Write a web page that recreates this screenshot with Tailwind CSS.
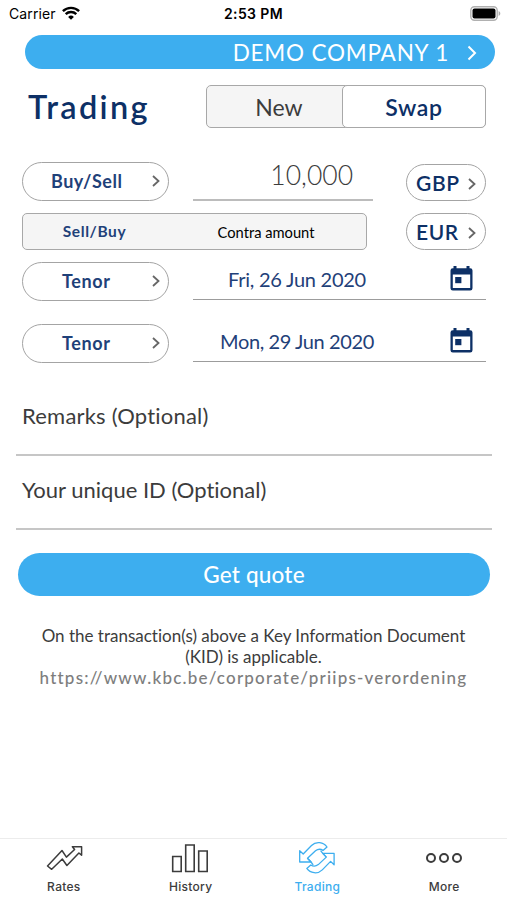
<!DOCTYPE html>
<html lang="en">
<head>
    <meta charset="UTF-8">
    <meta name="viewport" content="width=device-width, initial-scale=1.0">
    <title>Trading</title>
    <script src="https://cdn.jsdelivr.net/npm/@tailwindcss/browser@4"></script>
</head>
<body class="bg-white">
    <div class="flex flex-col w-[507px] h-[900px] overflow-hidden font-['Lato',sans-serif] [font-variant-ligatures:none] text-[#3c3c3c]">

        <!-- Status bar -->
        <div class="grid grid-cols-3 items-center h-[27px] mb-2 px-[9px] font-['Inter',sans-serif] text-black">
            <div class="flex items-center gap-[6px] text-[14px]">
                <span class="tracking-[0.1px]">Carrier</span>
                <svg class="w-[18px] h-[14px] -mt-[2px]" viewBox="0 0 18 14" fill="none" stroke="#000" stroke-width="2.4">
                    <path d="M0.9 5.2a11.6 11.6 0 0 1 16.2 0"/>
                    <path d="M3.7 8.2a7.6 7.6 0 0 1 10.6 0"/>
                    <path d="M9 13.8L6.1 10.9a4.1 4.1 0 0 1 5.8 0z" fill="#000" stroke="none"/>
                </svg>
            </div>
            <div class="text-center text-[14px] font-semibold tracking-[0.4px]">2:53 PM</div>
            <div class="flex justify-end">
                <svg class="w-[31px] h-[15px] -mr-[3px] -mt-px" viewBox="0 0 31 15">
                    <rect x="0.8" y="0.8" width="26.4" height="13.4" rx="3.6" fill="#fff" stroke="#b0b0b0" stroke-width="1.4"/>
                    <rect x="2.5" y="2.5" width="23" height="10" rx="2" fill="#000"/>
                    <path d="M28.6 5v5c1-.4 1.7-1.4 1.7-2.5s-.7-2.1-1.7-2.5z" fill="#aaa"/>
                </svg>
            </div>
        </div>

        <!-- Company -->
        <button class="flex items-center justify-end h-[34px] shrink-0 ml-[25px] mr-[12px] pt-[2px] pr-[18px] rounded-full bg-[#3daeef] text-white">
            <span class="text-[22.5px] leading-none tracking-[0.8px]">DEMO COMPANY 1</span>
            <svg class="w-[10px] h-[16px] ml-[18px]" viewBox="0 0 10 16" fill="none" stroke="currentColor" stroke-width="2"><path d="M1.5 1.5L8 8l-6.5 6.5"/></svg>
        </button>

        <!-- Title -->
        <div class="flex items-center justify-between h-[43px] shrink-0 mt-4 pl-[28px] pr-[21px]">
            <h1 class="mt-px text-[32.5px] leading-none font-semibold tracking-[2.3px] text-[#0d3066]">Trading</h1>
            <div class="flex w-[280px] h-full rounded-[5px] border border-[#a8a8a8] bg-[#f5f5f5] text-[23px]">
                <div class="flex-1 flex items-center justify-center pt-[2px] pl-2">New</div>
                <div class="w-[144px] -m-px pt-[2px] flex items-center justify-center rounded-[5px] border border-[#a8a8a8] bg-white font-semibold tracking-[0.7px] text-[#0d3066]">Swap</div>
            </div>
        </div>

        <!-- Amounts -->
        <div class="flex items-end h-[39px] shrink-0 mt-[34px] pl-[22px] pr-[21px]">
            <button class="flex items-center justify-between w-[147px] h-[39px] pl-[28px] pr-[8px] pb-[2px] rounded-full border border-[#a4a4a4]">
                <span class="text-[18px] leading-none font-bold tracking-[0.5px] text-[#1f4179]">Buy/Sell</span>
                <svg class="w-[8px] h-[12px]" viewBox="0 0 8 12" fill="none" stroke="#666" stroke-width="1.8"><path d="M1 1l5.5 5L1 11"/></svg>
            </button>
            <div class="w-[180px] h-[39px] ml-[24px] pr-[20px] border-b-2 border-[#bcbcbc] text-right text-[26.5px] leading-[26px] font-light">10,000</div>
            <button class="flex items-center justify-between w-[80px] h-[37px] ml-auto px-[9px] rounded-full border border-[#a4a4a4]">
                <span class="text-[21px] leading-none font-semibold tracking-[0.6px] text-[#0d3066]">GBP</span>
                <svg class="w-[8px] h-[12px] mt-[2px]" viewBox="0 0 8 12" fill="none" stroke="#666" stroke-width="1.8"><path d="M1 1l5.5 5L1 11"/></svg>
            </button>
        </div>
        <div class="flex items-center h-[37px] shrink-0 mt-3 pl-[22px] pr-[21px]">
            <div class="flex items-center w-[345px] h-full pt-px rounded-[5px] border border-[#a8a8a8] bg-[#f5f5f5] leading-none">
                <span class="w-[143px] text-center text-[15.5px] font-bold tracking-[0.6px] text-[#1f4179]">Sell/Buy</span>
                <span class="flex-1 text-center text-[14.7px] text-black">Contra amount</span>
            </div>
            <button class="flex items-center justify-between w-[80px] h-full ml-auto px-[9px] rounded-full border border-[#a4a4a4]">
                <span class="text-[21px] leading-none font-semibold tracking-[0.6px] text-[#0d3066]">EUR</span>
                <svg class="w-[8px] h-[12px] mt-[2px]" viewBox="0 0 8 12" fill="none" stroke="#666" stroke-width="1.8"><path d="M1 1l5.5 5L1 11"/></svg>
            </button>
        </div>

        <!-- Dates -->
        <div class="flex h-[39px] shrink-0 mt-3 pl-[22px] pr-[21px]">
            <button class="flex items-center justify-between w-[147px] h-full pl-[39px] pr-[8px] pb-[2px] rounded-full border border-[#a4a4a4]">
                <span class="text-[18px] leading-none font-bold tracking-[0.6px] text-[#1f4179]">Tenor</span>
                <svg class="w-[8px] h-[12px]" viewBox="0 0 8 12" fill="none" stroke="#666" stroke-width="1.8"><path d="M1 1l5.5 5L1 11"/></svg>
            </button>
            <div class="flex items-center w-[293px] h-[38px] ml-[24px] pr-[13px] pb-[4px] border-b border-[#9c9c9c]">
                <span class="flex-1 pr-[49px] text-center text-[20px] leading-none tracking-[-0.25px] text-[#1f4179]">Fri, 26 Jun 2020</span>
                <svg class="w-[23px] h-[25px]" viewBox="0 0 23 25" fill="#0d3066"><path fill-rule="evenodd" d="M3.5 0h3v2.3h10V0h3v2.3h.7a2.3 2.3 0 0 1 2.3 2.3v17.6a2.3 2.3 0 0 1-2.3 2.3H2.8a2.3 2.3 0 0 1-2.3-2.3V4.6a2.3 2.3 0 0 1 2.3-2.3h.7zM2.8 8.4v13.5h17.4V8.4z"/><path d="M5.2 11h6.2v6.2H5.2z"/></svg>
            </div>
        </div>
        <div class="flex h-[39px] shrink-0 mt-[23px] pl-[22px] pr-[21px]">
            <button class="flex items-center justify-between w-[147px] h-full pl-[39px] pr-[8px] pb-[2px] rounded-full border border-[#a4a4a4]">
                <span class="text-[18px] leading-none font-bold tracking-[0.6px] text-[#1f4179]">Tenor</span>
                <svg class="w-[8px] h-[12px]" viewBox="0 0 8 12" fill="none" stroke="#666" stroke-width="1.8"><path d="M1 1l5.5 5L1 11"/></svg>
            </button>
            <div class="flex items-center w-[293px] h-[38px] ml-[24px] pr-[13px] pb-[4px] border-b border-[#9c9c9c]">
                <span class="flex-1 pr-[49px] text-center text-[20px] leading-none tracking-[-0.4px] text-[#1f4179]">Mon, 29 Jun 2020</span>
                <svg class="w-[23px] h-[25px]" viewBox="0 0 23 25" fill="#0d3066"><path fill-rule="evenodd" d="M3.5 0h3v2.3h10V0h3v2.3h.7a2.3 2.3 0 0 1 2.3 2.3v17.6a2.3 2.3 0 0 1-2.3 2.3H2.8a2.3 2.3 0 0 1-2.3-2.3V4.6a2.3 2.3 0 0 1 2.3-2.3h.7zM2.8 8.4v13.5h17.4V8.4z"/><path d="M5.2 11h6.2v6.2H5.2z"/></svg>
            </div>
        </div>

        <!-- Optional fields -->
        <div class="h-[53px] shrink-0 mt-[40px] ml-[16px] mr-[15px] pl-[6px] border-b-2 border-[#c6c6c6] text-[22px] leading-[26px] tracking-[0.2px]">Remarks (Optional)</div>
        <div class="h-[53px] shrink-0 mt-[21px] ml-[16px] mr-[15px] pl-[6px] border-b-2 border-[#c6c6c6] text-[22px] leading-[26px]">Your unique ID (Optional)</div>

        <button class="h-[43px] shrink-0 mt-[23px] ml-[18px] mr-[17px] pt-[2px] rounded-full bg-[#3daeef] text-white text-[22.5px] font-medium leading-none tracking-[0.2px]">Get quote</button>

        <div class="mt-[29px] text-center text-[17px] leading-[21px] whitespace-nowrap">
            <p>On the transaction(s) above a Key Information Document</p>
            <p>(KID) is applicable.</p>
            <p class="font-medium tracking-[1.2px] text-[#7d7d7d]">https://www.kbc.be/corporate/priips-verordening</p>
        </div>

        <!-- Tab bar -->
        <nav class="grid grid-cols-4 h-[62px] shrink-0 mt-auto border-t border-[#ececec] font-['Inter',sans-serif] text-[12px] leading-none font-medium tracking-[0.3px]">
            <div class="flex flex-col items-center">
                <svg class="w-[40px] h-[38px]" viewBox="0 0 40 38" fill="none" stroke="#3c3c3c" stroke-width="1.5" stroke-linejoin="round"><path d="M4.5 27L19 11.5l4.4 6.6 8.2-7.6-2.2-2.8h9.2v8.5l-2.7-2.2-12 12.5-4.6-6.5L8.7 30.3z"/></svg>
                <span class="mt-[4px] pl-px">Rates</span>
            </div>
            <div class="flex flex-col items-center">
                <svg class="w-[40px] h-[38px]" viewBox="0 0 40 38" fill="none" stroke="#3c3c3c" stroke-width="1.6"><path d="M2.7 17.5h8.5v15H2.7zM15.7 6h8.5v26.5h-8.5zM28.7 12h8.5v20.5h-8.5z"/></svg>
                <span class="mt-[4px] pl-px">History</span>
            </div>
            <div class="flex flex-col items-center text-[#3daeef]">
                <svg class="w-[40px] h-[38px]" viewBox="0 0 40 38" fill="none" stroke="currentColor" stroke-width="1.3" stroke-linejoin="round">
                    <path d="M2.7 11.7V23H14l-3.5-3.7 8-7.5c2.700-2.100 5-2.100 7.500-.4L30 8C26.500 3 19 2 14.500 6.500L6.200 15z"/>
                    <path d="M37.1 25.7V14.4H25.8l3.5 3.7-8 7.5c-2.700 2.100-5 2.100-7.500.4L9.800 29.400c3.500 5 11 6 15.500 1.500l8.300-8.500z"/>
                    <path d="M10.500 19.300L14 23l2.200 2.800M29.300 18.100l-3.500-3.700-2.200-2.800"/>
                </svg>
                <span class="mt-[4px] pl-px">Trading</span>
            </div>
            <div class="flex flex-col items-center">
                <svg class="w-[40px] h-[38px]" viewBox="0 0 40 38" fill="none" stroke="#3c3c3c" stroke-width="2"><circle cx="7" cy="19" r="4"/><circle cx="20" cy="19" r="4"/><circle cx="33" cy="19" r="4"/></svg>
                <span class="mt-[4px] pl-px">More</span>
            </div>
        </nav>
    </div>
</body>
</html>
